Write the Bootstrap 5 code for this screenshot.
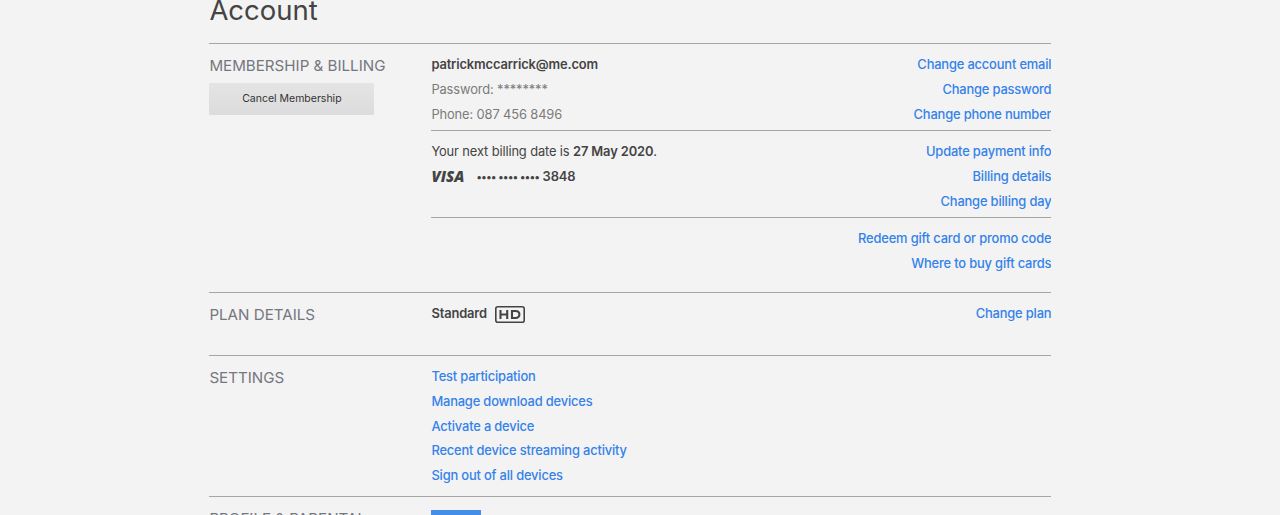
<!DOCTYPE html>
<html lang="en">
  <head>
    <meta charset="UTF-8" />
    <meta name="viewport" content="width=device-width, initial-scale=1.0" />
    <title>Account</title>
    <link href="https://cdn.jsdelivr.net/npm/bootstrap@5.3.0/dist/css/bootstrap.min.css" rel="stylesheet" />
    <style>
      body {
        background-color: #f3f3f3;
        color: #444;
        font-family: Inter, "Liberation Sans", sans-serif;
        font-size: 12.9px;
        letter-spacing: -0.13px;
        line-height: 24.7px;
        height: 515px;
        overflow: hidden;
      }
      .account-page {
        width: 842px;
        height: 515px;
        margin-left: 209.4px;
        overflow: hidden;
      }
      .account-title {
        height: 43px;
        margin: 0;
        font-size: 27.5px;
        font-weight: 400;
        letter-spacing: 0;
        line-height: 20px;
      }
      .account-section {
        border-top: 1px solid #a6a6a6;
        padding-top: 9.3px;
      }
      .section-label {
        width: 222px;
        flex: none;
        margin-top: -1.2px;
        color: #757780;
        font-size: 15.15px;
        letter-spacing: 0;
        line-height: 27px;
      }
      .billing { height: 249px; }
      .plan { height: 63px; }
      .settings { height: 141px; }
      .group-line {
        border-top: 1px solid #a6a6a6;
        margin-top: 2.7px;
        padding-top: 9.3px;
      }
      .muted-text { color: #7b7b7b; }
      .account-page a {
        color: #3482ea;
        font-weight: 450;
        letter-spacing: -0.17px;
        text-decoration: none;
      }
      .account-page strong { font-weight: 600; }
      .cancel-btn {
        width: 165px;
        height: 32px;
        margin-top: 4px;
        border-radius: 1px;
        border: 0;
        color: #333;
        background: linear-gradient(#e4e4e4, #dcdcde);
        font-size: 10.5px;
        line-height: 30px;
      }
      .visa-logo {
        width: 33px;
        font-family: "Open Sans", sans-serif;
        font-size: 15px;
        font-weight: 800;
        font-style: italic;
        letter-spacing: 0;
        line-height: 23px;
      }
      .card-dots {
        font-size: 10.6px;
        letter-spacing: -0.45px;
      }
      .hd-icon { width: 30px; height: 17px; }
      .profile-block {
        width: 50px;
        height: 40px;
        margin-top: 4px;
        background-color: #448ee9;
      }
    </style>
  </head>
  <body>
    <main class="account-page">
      <h1 class="account-title">Account</h1>

      <!-- Membership -->
      <section class="account-section billing d-flex">
        <div class="section-label">
          <div>MEMBERSHIP &amp; BILLING</div>
          <button class="cancel-btn d-block p-0" type="button">Cancel Membership</button>
        </div>
        <div class="flex-grow-1">
          <div class="d-flex justify-content-between">
            <div>
              <div><strong>patrickmccarrick@me.com</strong></div>
              <div class="muted-text">Password: ********</div>
              <div class="muted-text">Phone: 087 456 8496</div>
            </div>
            <div class="text-end">
              <div><a href="#">Change account email</a></div>
              <div><a href="#">Change password</a></div>
              <div><a href="#">Change phone number</a></div>
            </div>
          </div>
          <div class="group-line d-flex justify-content-between">
            <div>
              <div>Your next billing date is <strong>27 May 2020</strong>.</div>
              <div class="d-flex">
                <span class="visa-logo">VISA</span>
                <strong class="ms-2 ps-1"><span class="card-dots">•••• •••• ••••</span> 3848</strong>
              </div>
            </div>
            <div class="text-end">
              <div><a href="#">Update payment info</a></div>
              <div><a href="#">Billing details</a></div>
              <div><a href="#">Change billing day</a></div>
            </div>
          </div>
          <div class="group-line text-end">
            <div><a href="#">Redeem gift card or promo code</a></div>
            <div><a href="#">Where to buy gift cards</a></div>
          </div>
        </div>
      </section>

      <!-- Plan -->
      <section class="account-section plan d-flex">
        <div class="section-label">PLAN DETAILS</div>
        <div class="flex-grow-1 d-flex justify-content-between align-items-start">
          <div class="d-flex align-items-center">
            <strong>Standard</strong>
            <svg class="hd-icon ms-2" viewBox="0 0 30 17" fill="none" stroke="#444">
              <rect x="0.8" y="0.8" width="28.4" height="15.4" rx="2" stroke-width="1.6" />
              <path d="M5.5 4v9M12.2 4v9M5.5 8.5h6.7" stroke-width="2.1" />
              <path d="M17 5h3.5c2.4 0 3.9 1.3 3.9 3.5s-1.5 3.5-3.9 3.5H17z" stroke-width="2.1" />
            </svg>
          </div>
          <a href="#">Change plan</a>
        </div>
      </section>

      <!-- Settings -->
      <section class="account-section settings d-flex">
        <div class="section-label">SETTINGS</div>
        <div>
          <div><a href="#">Test participation</a></div>
          <div><a href="#">Manage download devices</a></div>
          <div><a href="#">Activate a device</a></div>
          <div><a href="#">Recent device streaming activity</a></div>
          <div><a href="#">Sign out of all devices</a></div>
        </div>
      </section>

      <!-- Profiles -->
      <section class="account-section d-flex">
        <div class="section-label">PROFILE &amp; PARENTAL</div>
        <div class="profile-block"></div>
      </section>
    </main>
    <script src="https://cdn.jsdelivr.net/npm/bootstrap@5.3.0/dist/js/bootstrap.bundle.min.js"></script>
  </body>
</html>
